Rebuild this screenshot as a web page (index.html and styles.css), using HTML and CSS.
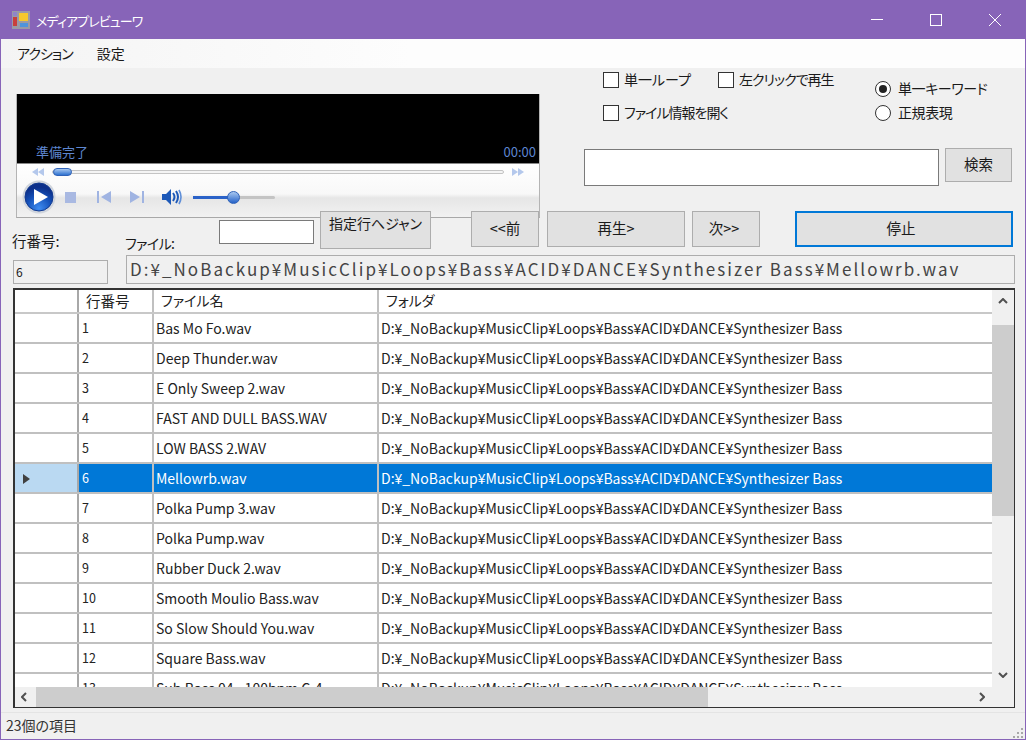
FILE: index.html
```html
<!DOCTYPE html>
<html lang="ja">

<head>
	<meta charset="utf-8">
	<title>メディアプレビューワ</title>
	<link rel="stylesheet" href="styles.css">
</head>

<body>
	<div class="window">
		<header class="titlebar">
			<svg class="app-icon" viewBox="0 0 18 18" width="18" height="18">
				<rect width="18" height="18" fill="#9a9aa6"></rect>
				<rect x="1" y="1" width="4" height="4" fill="#8f86c8"></rect>
				<rect x="1" y="6" width="4" height="9" fill="#c8403c"></rect>
				<rect x="7" y="2" width="9" height="8" fill="#f6c82c"></rect>
				<rect x="8" y="12" width="8" height="4" fill="#4f94dc"></rect>
			</svg>
			<span class="title">メディアプレビューワ</span>
			<div class="win-buttons">
				<svg viewBox="0 0 12 12" width="12" height="12"><path d="M0 5.5H12" stroke="#fff"></path></svg>
				<svg viewBox="0 0 12 12" width="12" height="12"><rect x=".5" y=".5" width="11" height="11" fill="none" stroke="#fff"></rect></svg>
				<svg viewBox="0 0 12 12" width="12" height="12"><path d="M0 0L12 12M12 0L0 12" stroke="#fff"></path></svg>
			</div>
		</header>

		<nav class="menubar">
			<span class="menu-action">アクション</span>
			<span>設定</span>
		</nav>

		<main class="form">
			<section class="top">
				<div class="player">
					<div class="video">
						<span>準備完了</span>
						<span>00:00</span>
					</div>
					<div class="player-bar">
						<div class="seek">
							<svg viewBox="0 0 12 8" width="12" height="8"><path d="M6 0V8L0 4zM12 0V8L6 4z" fill="#b4c8ec"></path></svg>
							<div class="seek-track"><div class="seek-thumb"></div></div>
							<svg viewBox="0 0 12 8" width="12" height="8"><path d="M0 0V8L6 4zM6 0V8L12 4z" fill="#b4c8ec"></path></svg>
						</div>
						<div class="transport">
							<svg class="play" viewBox="0 0 34 34" width="34" height="34">
								<defs>
									<radialGradient id="playfill" cx="50%" cy="90%" r="75%">
										<stop offset="0" stop-color="#3f8cf0"></stop>
										<stop offset=".6" stop-color="#1450b8"></stop>
										<stop offset="1" stop-color="#0c2f8a"></stop>
									</radialGradient>
								</defs>
								<circle cx="17" cy="17" r="16.5" fill="#cfd4dc"></circle>
								<circle cx="17" cy="17" r="14" fill="url(#playfill)" stroke="#123a90"></circle>
								<path d="M12 9L26 17L12 25z" fill="#fff"></path>
							</svg>
							<svg class="stop" viewBox="0 0 11 11" width="11" height="11"><rect width="11" height="11" fill="#a9b9e2"></rect></svg>
							<svg class="prev" viewBox="0 0 14 12" width="14" height="12"><path d="M0 0H2V12H0zM4 6L14 0V12z" fill="#a0b4e2"></path></svg>
							<svg class="next" viewBox="0 0 14 12" width="14" height="12"><path d="M0 0L10 6L0 12zM12 0H14V12H12z" fill="#a0b4e2"></path></svg>
							<svg class="volume" viewBox="0 0 20 16" width="20" height="16">
								<path d="M0 5H4L9 0V16L4 11H0z" fill="#1c58b8"></path>
								<path d="M11 4Q14 8 11 12M14 2Q18 8 14 14" fill="none" stroke="#1c58b8" stroke-width="2"></path>
								<path d="M17 1Q21 8 17 15" fill="none" stroke="#5f8fd8" stroke-width="1.6"></path>
							</svg>
							<div class="volume-track"><div class="volume-level"></div><div class="volume-thumb"></div></div>
						</div>
					</div>
				</div>

				<div class="side">
					<div class="options">
						<div class="checks">
							<label class="option"><span class="box"></span>単一ループ</label>
							<label class="option tight"><span class="box"></span>左クリックで再生</label>
							<label class="option tight"><span class="box"></span>ファイル情報を開く</label>
						</div>
						<div class="radios">
							<label class="option"><span class="radio on"></span>単一キーワード</label>
							<label class="option"><span class="radio"></span>正規表現</label>
						</div>
					</div>
					<div class="search">
						<div class="search-input"></div>
						<div class="btn search-btn">検索</div>
					</div>
				</div>
			</section>

			<section class="controls">
				<span class="label line-label">行番号:</span>
				<span class="label file-label">ファイル:</span>
				<div class="jump-input"></div>
				<div class="btn jump-btn">指定行へジャン</div>
				<div class="btn prev-btn">&lt;&lt;前</div>
				<div class="btn play-btn">再生&gt;</div>
				<div class="btn next-btn">次&gt;&gt;</div>
				<div class="btn stop-btn">停止</div>
			</section>

			<section class="fields">
				<div class="field line-field">6</div>
				<div class="field file-field">D:¥_NoBackup¥MusicClip¥Loops¥Bass¥ACID¥DANCE¥Synthesizer Bass¥Mellowrb.wav</div>
			</section>

			<section class="grid-box">
				<div class="grid-main">
					<div class="grid-view">
						<div class="row head"><div></div><div>行番号</div><div>ファイル名</div><div>フォルダ</div></div>
						<div class="row"><div></div><div>1</div><div>Bas Mo Fo.wav</div><div>D:¥_NoBackup¥MusicClip¥Loops¥Bass¥ACID¥DANCE¥Synthesizer Bass</div></div>
						<div class="row"><div></div><div>2</div><div>Deep Thunder.wav</div><div>D:¥_NoBackup¥MusicClip¥Loops¥Bass¥ACID¥DANCE¥Synthesizer Bass</div></div>
						<div class="row"><div></div><div>3</div><div>E Only Sweep 2.wav</div><div>D:¥_NoBackup¥MusicClip¥Loops¥Bass¥ACID¥DANCE¥Synthesizer Bass</div></div>
						<div class="row"><div></div><div>4</div><div>FAST AND DULL BASS.WAV</div><div>D:¥_NoBackup¥MusicClip¥Loops¥Bass¥ACID¥DANCE¥Synthesizer Bass</div></div>
						<div class="row"><div></div><div>5</div><div>LOW BASS 2.WAV</div><div>D:¥_NoBackup¥MusicClip¥Loops¥Bass¥ACID¥DANCE¥Synthesizer Bass</div></div>
						<div class="row selected"><div><svg viewBox="0 0 7 10" width="7" height="10"><path d="M0 0L7 5L0 10z" fill="#404040"></path></svg></div><div>6</div><div>Mellowrb.wav</div><div>D:¥_NoBackup¥MusicClip¥Loops¥Bass¥ACID¥DANCE¥Synthesizer Bass</div></div>
						<div class="row"><div></div><div>7</div><div>Polka Pump 3.wav</div><div>D:¥_NoBackup¥MusicClip¥Loops¥Bass¥ACID¥DANCE¥Synthesizer Bass</div></div>
						<div class="row"><div></div><div>8</div><div>Polka Pump.wav</div><div>D:¥_NoBackup¥MusicClip¥Loops¥Bass¥ACID¥DANCE¥Synthesizer Bass</div></div>
						<div class="row"><div></div><div>9</div><div>Rubber Duck 2.wav</div><div>D:¥_NoBackup¥MusicClip¥Loops¥Bass¥ACID¥DANCE¥Synthesizer Bass</div></div>
						<div class="row"><div></div><div>10</div><div>Smooth Moulio Bass.wav</div><div>D:¥_NoBackup¥MusicClip¥Loops¥Bass¥ACID¥DANCE¥Synthesizer Bass</div></div>
						<div class="row"><div></div><div>11</div><div>So Slow Should You.wav</div><div>D:¥_NoBackup¥MusicClip¥Loops¥Bass¥ACID¥DANCE¥Synthesizer Bass</div></div>
						<div class="row"><div></div><div>12</div><div>Square Bass.wav</div><div>D:¥_NoBackup¥MusicClip¥Loops¥Bass¥ACID¥DANCE¥Synthesizer Bass</div></div>
						<div class="row"><div></div><div>13</div><div>Sub Bass 04 - 100bpm C-4</div><div>D:¥_NoBackup¥MusicClip¥Loops¥Bass¥ACID¥DANCE¥Synthesizer Bass</div></div>
					</div>
					<div class="vscroll">
						<svg viewBox="0 0 10 6" width="10" height="6"><path d="M1 5L5 1L9 5" fill="none" stroke="#505050" stroke-width="2"></path></svg>
						<div class="vscroll-track"><div class="vscroll-thumb"></div></div>
						<svg viewBox="0 0 10 6" width="10" height="6"><path d="M1 1L5 5L9 1" fill="none" stroke="#505050" stroke-width="2"></path></svg>
					</div>
				</div>
				<div class="hscroll">
					<svg viewBox="0 0 6 10" width="6" height="10"><path d="M5 1L1 5L5 9" fill="none" stroke="#505050" stroke-width="2"></path></svg>
					<div class="hscroll-track"><div class="hscroll-thumb"></div></div>
					<svg viewBox="0 0 6 10" width="6" height="10"><path d="M1 1L5 5L1 9" fill="none" stroke="#505050" stroke-width="2"></path></svg>
				</div>
			</section>
		</main>

		<footer class="statusbar">
			<span>23個の項目</span>
			<svg viewBox="0 0 12 12" width="12" height="12"><path d="M9 1h2v2H9zM5 5h2v2H5zM9 5h2v2H9zM1 9h2v2H1zM5 9h2v2H5zM9 9h2v2H9z" fill="#a8a8a8"></path></svg>
		</footer>
	</div>
</body>

</html>
```

FILE: styles.css
```css
* {
	box-sizing: border-box;
}

body {
	margin: 0;
	font-family: "Noto Sans CJK JP", "Noto Sans", sans-serif;
	font-size: 14px;
	font-feature-settings: "palt";
	color: #1a1a1a;
}

.window {
	display: flex;
	flex-direction: column;
	width: 1026px;
	height: 740px;
	overflow: hidden;
	border: 1px solid #8764b8;
	background-color: #f0f0f0;
}

.titlebar {
	display: flex;
	align-items: center;
	flex: none;
	height: 38px;
	padding-left: 11px;
	background-color: #8764b8;
	color: #fff;
}

.title {
	margin-left: 6px;
	font-size: 13px;
	letter-spacing: -.9px;
}

.win-buttons {
	display: flex;
	align-items: center;
	gap: 47px;
	margin-left: auto;
	margin-right: 24px;
}

.menubar {
	display: flex;
	flex: none;
	gap: 24px;
	align-items: center;
	height: 29px;
	padding-left: 16px;
	padding-bottom: 1px;
	background: linear-gradient(to right, #f4f4f4, #fdfdfd 40%, #fdfdfd);
}

.menu-action {
	letter-spacing: -1px;
}

.form {
	flex: none;
	height: 644px;
}

.top {
	display: flex;
	height: 143px;
}

.player {
	display: flex;
	flex-direction: column;
	flex: none;
	width: 524px;
	height: 124px;
	margin-top: 26px;
	margin-left: 15px;
	border-left: 1px solid #b4b4b4;
	border-right: 1px solid #b4b4b4;
	border-bottom: 1px solid #a8a8a8;
}

.video {
	display: flex;
	align-items: flex-end;
	justify-content: space-between;
	flex: none;
	height: 69px;
	padding: 0 3px 2px 19px;
	background-color: #000;
	color: #5d86d0;
	font-size: 13px;
	line-height: 18px;
}

.player-bar {
	flex: 1;
	border-top: 1px solid #888;
	background: linear-gradient(to bottom, #fff 0, #f8f8f8 30px, #e6e6e6 34px, #f2f2f2 54px);
}

.seek {
	display: flex;
	align-items: center;
	height: 15px;
	padding-left: 15px;
}

.seek-track {
	position: relative;
	width: 452px;
	height: 4px;
	margin: 0 8px;
	border: 1px solid #c4c4c4;
	border-radius: 2px;
	background-color: #f4f4f4;
}

/* knob sits over the track */
.seek-thumb {
	position: absolute;
	top: -3px;
	left: 0;
	width: 19px;
	height: 8px;
	border: 1px solid #2f62b8;
	border-radius: 4px;
	background: linear-gradient(to bottom, #a8c8f0, #2f72d0);
}

.transport {
	display: flex;
	align-items: center;
	height: 36px;
	padding-left: 5px;
}

.stop {
	margin-left: 9px;
}

.prev {
	margin-left: 21px;
}

.next {
	margin-left: 19px;
}

.volume {
	margin-left: 18px;
}

.volume-track {
	position: relative;
	width: 82px;
	height: 3px;
	margin-left: 11px;
	border-radius: 2px;
	background-color: #c4c4c4;
}

.volume-level {
	width: 40px;
	height: 3px;
	background-color: #2a62c8;
}

.volume-thumb {
	position: absolute;
	top: -5px;
	left: 34px;
	width: 13px;
	height: 13px;
	border: 1px solid #2f62b8;
	border-radius: 50%;
	background: linear-gradient(to bottom, #a8c8f0, #2562c8);
}

.side {
	flex: none;
	width: 429px;
	margin-left: 44px;
}

.options {
	display: flex;
	height: 80px;
}

.checks {
	display: grid;
	grid-template-columns: 115px 157px;
	grid-auto-rows: 33px;
	align-content: start;
	margin-left: 19px;
	padding-top: 2px;
	white-space: nowrap;
}

.radios {
	display: flex;
	flex-direction: column;
	gap: 6px;
	padding-top: 11px;
	white-space: nowrap;
	letter-spacing: -.4px;
}

.option {
	display: flex;
	align-items: center;
	height: 18px;
}

.tight {
	letter-spacing: -1px;
}

.box {
	flex: none;
	width: 16px;
	height: 16px;
	margin-top: 2px;
	margin-right: 5px;
	border: 1px solid #333;
	background-color: #fff;
}

.radio {
	flex: none;
	display: flex;
	align-items: center;
	justify-content: center;
	width: 16px;
	height: 16px;
	margin-top: 2px;
	margin-right: 7px;
	border: 1px solid #333;
	border-radius: 50%;
	background-color: #fff;
}

.radio.on::after {
	content: "";
	width: 8px;
	height: 8px;
	border-radius: 50%;
	background-color: #222;
}

.search {
	display: flex;
	align-items: flex-start;
}

.search-input {
	width: 355px;
	height: 37px;
	margin-top: 1px;
	border: 1px solid #7a7a7a;
	background-color: #fff;
}

.btn {
	display: flex;
	align-items: center;
	justify-content: center;
	flex: none;
	padding-bottom: 3px;
	border: 1px solid #adadad;
	background-color: #e1e1e1;
	font-size: 14.5px;
}

.search-btn {
	width: 67px;
	height: 34px;
	margin-left: 6px;
}

.controls {
	position: relative;
	display: flex;
	align-items: flex-start;
	height: 44px;
}

.label {
	flex: none;
	line-height: 18px;
}

.line-label {
	width: 113px;
	margin-top: 21px;
	margin-left: 11px;
	font-size: 14.5px;
}

.file-label {
	width: 94px;
	margin-top: 23px;
	letter-spacing: -.6px;
}

.jump-input {
	flex: none;
	width: 95px;
	height: 24px;
	margin-top: 9px;
	border: 1px solid #7a7a7a;
	background-color: #fff;
}

.jump-btn {
	align-items: flex-start;
	width: 111px;
	height: 38px;
	margin-left: 6px;
	padding-top: 1px;
	font-size: 14px;
}

.prev-btn {
	width: 68px;
	height: 36px;
	margin-left: 40px;
}

.play-btn {
	width: 138px;
	height: 36px;
	margin-left: 8px;
}

.next-btn {
	width: 68px;
	height: 36px;
	margin-left: 7px;
	padding-right: 4px;
}

.stop-btn {
	width: 218px;
	height: 36px;
	margin-left: 35px;
	padding-right: 6px;
	border: 2px solid #0078d7;
}

.fields {
	display: flex;
	height: 29px;
}

.field {
	flex: none;
	height: 29px;
	border: 1px solid #adadad;
	background-color: #f0f0f0;
	white-space: nowrap;
}

.line-field {
	width: 95px;
	height: 24px;
	margin-top: 5px;
	margin-left: 12px;
	padding-left: 2px;
	font-size: 12px;
	line-height: 22px;
}

.file-field {
	width: 889px;
	margin-left: 18px;
	padding-left: 3px;
	color: #444;
	font-size: 17px;
	font-feature-settings: normal;
	line-height: 25px;
	letter-spacing: 2.04px;
}

.grid-box {
	display: flex;
	flex-direction: column;
	width: 1002px;
	height: 420px;
	margin-top: 4px;
	margin-left: 12px;
	border: 2px solid #333;
	border-right-width: 1px;
	border-bottom-width: 1px;
}

.grid-main {
	display: flex;
	flex: 1;
	min-height: 0;
}

.grid-view {
	flex: 1;
	min-width: 0;
	overflow: hidden;
	background-color: #fff;
}

.row {
	display: grid;
	grid-template-columns: 64px 75px 225px 1fr;
	height: 30px;
	border-bottom: 2px solid #c0c0c0;
	color: #222;
	font-size: 14px;
	font-feature-settings: normal;
	line-height: 28px;
	white-space: nowrap;
}

.row > div {
	padding-left: 2px;
	overflow: hidden;
	border-right: 2px solid #c0c0c0;
}

.row > div:nth-child(2) {
	padding-left: 3px;
	font-size: 12.5px;
}

.row > div:first-child {
	padding-left: 8px;
	border-right-color: #a8a8a8;
}

.row > div:last-child {
	border-right: 0;
}

.head {
	height: 24px;
	border-bottom-color: #c8c8c8;
	font-feature-settings: "palt";
	line-height: 21px;
}

.head > div {
	padding-left: 7px;
}

.head > div:nth-child(2) {
	padding-left: 7px;
	font-size: 14.5px;
}

.selected {
	background-color: #0078d7;
	color: #fff;
}

.selected > div:first-child {
	background-color: #bad9f2;
}

.vscroll {
	display: flex;
	flex-direction: column;
	align-items: center;
	flex: none;
	width: 22px;
	padding-top: 8px;
	padding-bottom: 9px;
}

.vscroll-track {
	flex: 1;
	width: 100%;
	padding-top: 21px;
}

.vscroll-thumb {
	width: 100%;
	height: 191px;
	background-color: #cdcdcd;
}

.hscroll {
	display: flex;
	align-items: center;
	flex: none;
	height: 20px;
	padding: 0 29px 0 6px;
}

.hscroll-track {
	flex: 1;
	height: 100%;
	padding-left: 9px;
}

.hscroll-thumb {
	width: 672px;
	height: 100%;
	background-color: #cdcdcd;
}

.statusbar {
	display: flex;
	align-items: center;
	justify-content: space-between;
	flex: 1;
	padding-left: 5px;
	padding-bottom: 2px;
	border-top: 1px solid #e4e4e4;
	color: #333;
}

.statusbar svg {
	align-self: flex-end;
	margin-right: 1px;
	margin-bottom: -2px;
}
```
